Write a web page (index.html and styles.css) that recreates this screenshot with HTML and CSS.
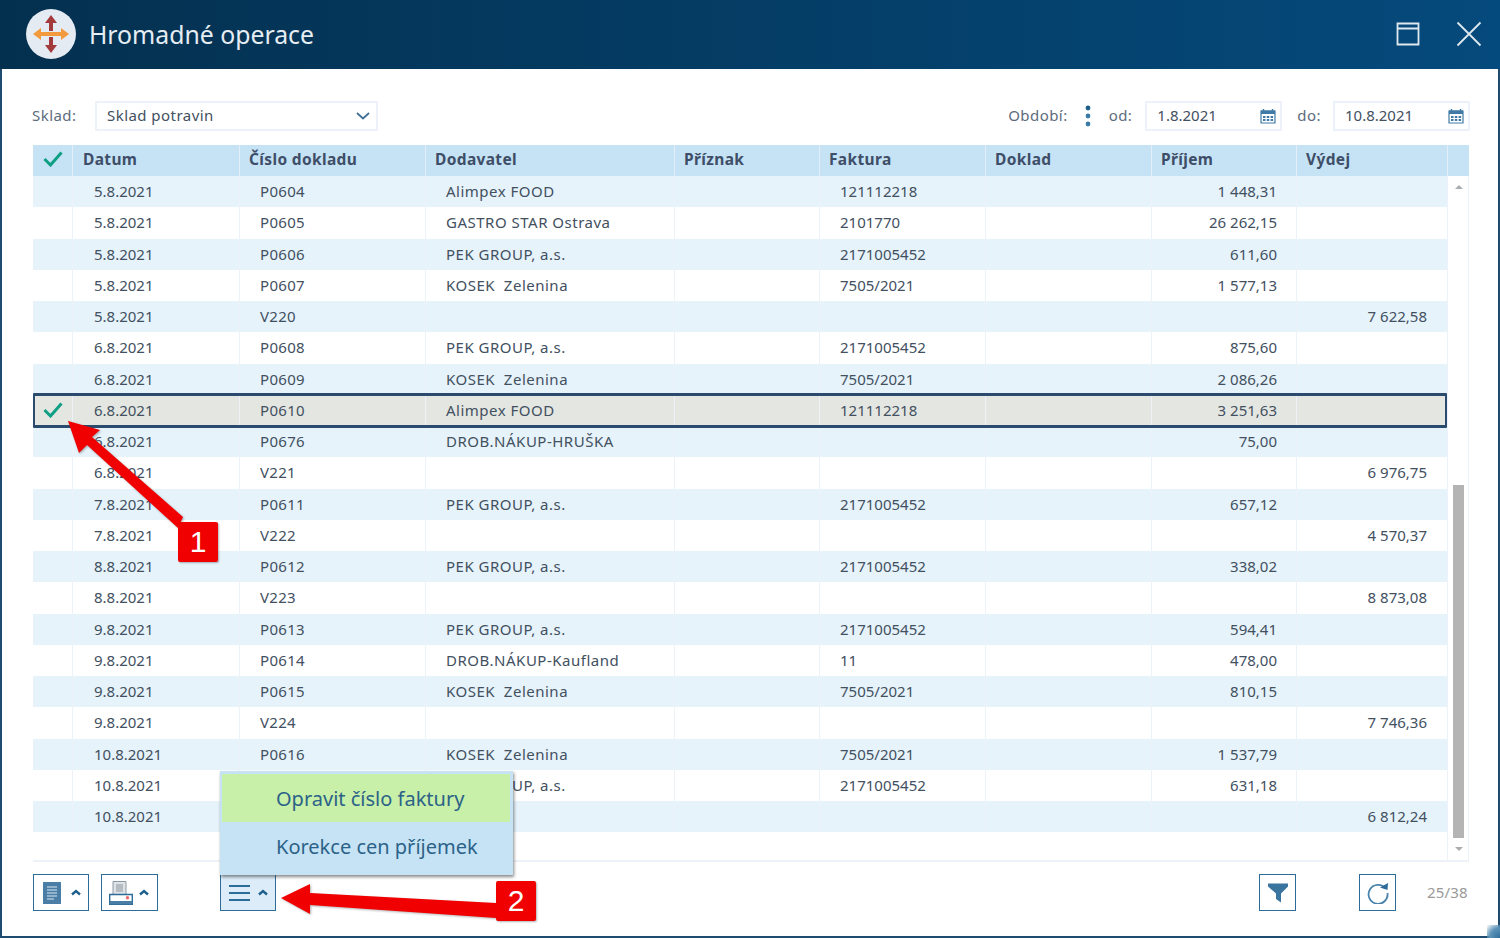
FILE: index.html
```html
<!DOCTYPE html>
<html lang="cs">
<head>
<meta charset="utf-8">
<title>Hromadné operace</title>
<link rel="stylesheet" href="styles.css">
</head>
<body>
<div class="window">
  <header class="titlebar">
    <div class="logo">
      <svg width="50" height="50" viewBox="0 0 50 50"><circle cx="25" cy="25" r="25" fill="#e4ebf2"/><path d="M25 6l6 8h-4v8h-4v-8h-4zM25 44l-6-8h4v-8h4v8h4z" fill="#a33a3c"/><path d="M7 25l8-6v4h20v-4l8 6-8 6v-4H15v4z" fill="#f49a3e"/></svg>
    </div>
    <h1 class="title">Hromadné operace</h1>
    <div class="win-actions">
      <svg width="24" height="24" viewBox="0 0 24 24"><path d="M1.500 1.500h21v21h-21zM1.500 6.500h21" fill="none" stroke="#dfe8ef" stroke-width="1.800"/></svg>
      <svg width="26" height="26" viewBox="0 0 26 26"><path d="M1.500 1.500l23 23M24.500 1.500l-23 23" fill="none" stroke="#dfe8ef" stroke-width="1.800"/></svg>
    </div>
  </header>
  <main class="content">
    <div class="filters">
      <span class="label label-sklad">Sklad:</span>
      <div class="field field-select"><span>Sklad potravin</span>
        <svg width="14" height="8" viewBox="0 0 14 8"><path d="M1 1l6 5.500L13 1" fill="none" stroke="#3f6f96" stroke-width="1.700"/></svg>
      </div>
      <div class="period">
        <span class="label">Období:</span>
        <svg class="dots" width="6" height="22" viewBox="0 0 6 22"><circle cx="3" cy="3" r="2.400" fill="#1f5f8c"/><circle cx="3" cy="11" r="2.400" fill="#3b7ba7"/><circle cx="3" cy="19" r="2.400" fill="#3b7ba7"/></svg>
        <span class="label label-od">od:</span>
        <div class="field field-date"><span>1.8.2021</span>
          <svg width="16" height="16" viewBox="0 0 16 16"><path d="M1 3h14v12H1z" fill="#fff" stroke="#3f7ba6" stroke-width="1.200"/><path d="M1 2.500h14v3.500H1z" fill="#3f7ba6"/><path d="M3.500 1v2M12.500 1v2" stroke="#3f7ba6" stroke-width="1.400"/><path d="M3 8h2.500v2H3zM6.800 8h2.500v2H6.800zM10.600 8h2.500v2h-2.500zM3 11h2.500v2H3zM6.800 11h2.500v2H6.800zM10.600 11h2.500v2h-2.500z" fill="#3f7ba6"/></svg>
        </div>
        <span class="label label-do">do:</span>
        <div class="field field-date"><span>10.8.2021</span>
          <svg width="16" height="16" viewBox="0 0 16 16"><path d="M1 3h14v12H1z" fill="#fff" stroke="#3f7ba6" stroke-width="1.200"/><path d="M1 2.500h14v3.500H1z" fill="#3f7ba6"/><path d="M3.500 1v2M12.500 1v2" stroke="#3f7ba6" stroke-width="1.400"/><path d="M3 8h2.500v2H3zM6.800 8h2.500v2H6.800zM10.600 8h2.500v2h-2.500zM3 11h2.500v2H3zM6.800 11h2.500v2H6.800zM10.600 11h2.500v2h-2.500z" fill="#3f7ba6"/></svg>
        </div>
      </div>
    </div>

    <div class="grid">
      <div class="row head">
        <div class="c"><svg class="check" width="20" height="16" viewBox="0 0 20 16"><path d="M1.500 8l6 6L18.500 1.500" fill="none" stroke="#0f9f84" stroke-width="3"/></svg></div>
        <div class="c">Datum</div><div class="c">Číslo dokladu</div><div class="c">Dodavatel</div><div class="c">Příznak</div><div class="c">Faktura</div><div class="c">Doklad</div><div class="c">Příjem</div><div class="c">Výdej</div><div class="c-end"></div>
      </div>
      <div class="body">
        <div class="rows">
          <div class="row"><div class="c"></div><div class="c">5.8.2021</div><div class="c">P0604</div><div class="c">Alimpex FOOD</div><div class="c"></div><div class="c">121112218</div><div class="c"></div><div class="c num">1 448,31</div><div class="c num"></div></div>
          <div class="row"><div class="c"></div><div class="c">5.8.2021</div><div class="c">P0605</div><div class="c">GASTRO STAR Ostrava</div><div class="c"></div><div class="c">2101770</div><div class="c"></div><div class="c num">26 262,15</div><div class="c num"></div></div>
          <div class="row"><div class="c"></div><div class="c">5.8.2021</div><div class="c">P0606</div><div class="c">PEK GROUP, a.s.</div><div class="c"></div><div class="c">2171005452</div><div class="c"></div><div class="c num">611,60</div><div class="c num"></div></div>
          <div class="row"><div class="c"></div><div class="c">5.8.2021</div><div class="c">P0607</div><div class="c">KOSEK&nbsp; Zelenina</div><div class="c"></div><div class="c">7505/2021</div><div class="c"></div><div class="c num">1 577,13</div><div class="c num"></div></div>
          <div class="row"><div class="c"></div><div class="c">5.8.2021</div><div class="c">V220</div><div class="c"></div><div class="c"></div><div class="c"></div><div class="c"></div><div class="c num"></div><div class="c num">7 622,58</div></div>
          <div class="row"><div class="c"></div><div class="c">6.8.2021</div><div class="c">P0608</div><div class="c">PEK GROUP, a.s.</div><div class="c"></div><div class="c">2171005452</div><div class="c"></div><div class="c num">875,60</div><div class="c num"></div></div>
          <div class="row"><div class="c"></div><div class="c">6.8.2021</div><div class="c">P0609</div><div class="c">KOSEK&nbsp; Zelenina</div><div class="c"></div><div class="c">7505/2021</div><div class="c"></div><div class="c num">2 086,26</div><div class="c num"></div></div>
          <div class="row selected"><div class="c"><svg class="check" width="20" height="16" viewBox="0 0 20 16"><path d="M1.500 8l6 6L18.500 1.500" fill="none" stroke="#0f9f84" stroke-width="3"/></svg></div><div class="c">6.8.2021</div><div class="c">P0610</div><div class="c">Alimpex FOOD</div><div class="c"></div><div class="c">121112218</div><div class="c"></div><div class="c num">3 251,63</div><div class="c num"></div></div>
          <div class="row"><div class="c"></div><div class="c">6.8.2021</div><div class="c">P0676</div><div class="c">DROB.NÁKUP-HRUŠKA</div><div class="c"></div><div class="c"></div><div class="c"></div><div class="c num">75,00</div><div class="c num"></div></div>
          <div class="row"><div class="c"></div><div class="c">6.8.2021</div><div class="c">V221</div><div class="c"></div><div class="c"></div><div class="c"></div><div class="c"></div><div class="c num"></div><div class="c num">6 976,75</div></div>
          <div class="row"><div class="c"></div><div class="c">7.8.2021</div><div class="c">P0611</div><div class="c">PEK GROUP, a.s.</div><div class="c"></div><div class="c">2171005452</div><div class="c"></div><div class="c num">657,12</div><div class="c num"></div></div>
          <div class="row"><div class="c"></div><div class="c">7.8.2021</div><div class="c">V222</div><div class="c"></div><div class="c"></div><div class="c"></div><div class="c"></div><div class="c num"></div><div class="c num">4 570,37</div></div>
          <div class="row"><div class="c"></div><div class="c">8.8.2021</div><div class="c">P0612</div><div class="c">PEK GROUP, a.s.</div><div class="c"></div><div class="c">2171005452</div><div class="c"></div><div class="c num">338,02</div><div class="c num"></div></div>
          <div class="row"><div class="c"></div><div class="c">8.8.2021</div><div class="c">V223</div><div class="c"></div><div class="c"></div><div class="c"></div><div class="c"></div><div class="c num"></div><div class="c num">8 873,08</div></div>
          <div class="row"><div class="c"></div><div class="c">9.8.2021</div><div class="c">P0613</div><div class="c">PEK GROUP, a.s.</div><div class="c"></div><div class="c">2171005452</div><div class="c"></div><div class="c num">594,41</div><div class="c num"></div></div>
          <div class="row"><div class="c"></div><div class="c">9.8.2021</div><div class="c">P0614</div><div class="c">DROB.NÁKUP-Kaufland</div><div class="c"></div><div class="c">11</div><div class="c"></div><div class="c num">478,00</div><div class="c num"></div></div>
          <div class="row"><div class="c"></div><div class="c">9.8.2021</div><div class="c">P0615</div><div class="c">KOSEK&nbsp; Zelenina</div><div class="c"></div><div class="c">7505/2021</div><div class="c"></div><div class="c num">810,15</div><div class="c num"></div></div>
          <div class="row"><div class="c"></div><div class="c">9.8.2021</div><div class="c">V224</div><div class="c"></div><div class="c"></div><div class="c"></div><div class="c"></div><div class="c num"></div><div class="c num">7 746,36</div></div>
          <div class="row"><div class="c"></div><div class="c">10.8.2021</div><div class="c">P0616</div><div class="c">KOSEK&nbsp; Zelenina</div><div class="c"></div><div class="c">7505/2021</div><div class="c"></div><div class="c num">1 537,79</div><div class="c num"></div></div>
          <div class="row"><div class="c"></div><div class="c">10.8.2021</div><div class="c"></div><div class="c c-under-menu">PEK GROUP, a.s.</div><div class="c"></div><div class="c">2171005452</div><div class="c"></div><div class="c num">631,18</div><div class="c num"></div></div>
          <div class="row"><div class="c"></div><div class="c">10.8.2021</div><div class="c"></div><div class="c"></div><div class="c"></div><div class="c"></div><div class="c"></div><div class="c num"></div><div class="c num">6 812,24</div></div>
        </div>
        <div class="scrollbar">
          <span class="arrow-up"></span>
          <div class="track"><div class="thumb"></div></div>
          <span class="arrow-down"></span>
        </div>
      </div>
    </div>

    <footer class="toolbar">
      <button class="btn btn-wide" type="button">
        <svg width="18" height="22" viewBox="0 0 18 22"><path d="M0 0h18v22H0z" fill="#4a7ea6"/><path d="M4 5h10M4 8h10M4 11h10M4 14h10M4 17h7" stroke="#dbe8f1" stroke-width="1.100"/></svg>
        <svg class="caret" width="10" height="7" viewBox="0 0 10 7"><path d="M1 5.500l4-3.500 4 3.500" fill="none" stroke="#1f5f8c" stroke-width="2.400"/></svg>
      </button>
      <button class="btn btn-wide btn-print" type="button">
        <svg width="24" height="24" viewBox="0 0 24 24"><path d="M4 .5h13v14H4z" fill="#dfe3e6" stroke="#8b9ba8"/><path d="M7 3h7v8H7z" fill="#b5bcc2"/><path d="M.7 13.500h22.600v9.800H.7z" fill="#fff" stroke="#2d6c99" stroke-width="1.400"/><path d="M.7 20h22.600v3.300H.7z" fill="#4a7ea6"/><circle cx="18.500" cy="16.800" r="1.700" fill="#ee6a6a"/></svg>
        <svg class="caret" width="10" height="7" viewBox="0 0 10 7"><path d="M1 5.500l4-3.500 4 3.500" fill="none" stroke="#1f5f8c" stroke-width="2.400"/></svg>
      </button>
      <div class="menu-anchor">
        <div class="menu">
          <div class="menu-item active">Opravit číslo faktury</div>
          <div class="menu-item">Korekce cen příjemek</div>
        </div>
        <button class="btn btn-wide btn-open" type="button">
          <svg width="21" height="18" viewBox="0 0 21 18"><path d="M0 2h21M0 9h21M0 16h21" stroke="#2d6c99" stroke-width="2"/></svg>
          <svg class="caret" width="10" height="7" viewBox="0 0 10 7"><path d="M1 5.500l4-3.500 4 3.500" fill="none" stroke="#1f5f8c" stroke-width="2.400"/></svg>
        </button>
      </div>
      <button class="btn btn-square btn-filter" type="button">
        <svg width="20" height="20" viewBox="0 0 20 20"><path d="M0 .5h20v3l-7 7v9l-5-3.500v-5.500l-8-7z" fill="#3a759f"/></svg>
      </button>
      <button class="btn btn-square btn-refresh" type="button">
        <svg width="22" height="22" viewBox="0 0 22 22"><path d="M18.600 6.500A9.500 9.500 0 1 0 20.500 11" fill="none" stroke="#4a83ac" stroke-width="1.800"/><path d="M13 5.500l7.500 2.500.5-7z" fill="#2d6c99"/></svg>
      </button>
      <span class="count">25/38</span>
    </footer>
  </main>

  <svg class="annotations" width="1500" height="938" viewBox="0 0 1500 938">
    <path d="M68 421l32 9-8 7 91 80-5 11-91-83-8 8z" fill="#f00000"/>
    <path d="M281 898l29-14v9l186 10v15l-186-13v9z" fill="#f00000"/>
  </svg>
  <div class="badge badge-one">1</div>
  <div class="badge badge-two">2</div>
</div>
</body>
</html>
```

FILE: styles.css
```css
* { box-sizing: border-box; }
html, body { margin: 0; padding: 0; }
body {
  width: 1500px;
  height: 938px;
  overflow: hidden;
  background: #fff;
  font-family: "Noto Sans", "Open Sans", sans-serif;
  font-size: 15px;
  color: #42505f;
}
.window {
  position: relative;
  width: 1500px;
  height: 938px;
  display: flex;
  flex-direction: column;
  border: 2px solid #1e4c70;
  border-top: 0;
  background: #fff;
}
.window::after {
  content: "";
  position: absolute;
  right: -2px;
  bottom: -2px;
  width: 13px;
  height: 13px;
  background: radial-gradient(circle at 100% 100%, #2d6c99 0, #5d93b8 55%, rgba(255, 255, 255, 0) 100%);
}
.titlebar {
  height: 69px;
  margin: 0 -2px;
  flex: none;
  display: flex;
  align-items: center;
  padding: 0 0 2px 26px;
  background: linear-gradient(90deg, #04304f 0%, #054a7c 100%);
}
.logo { width: 50px; height: 50px; }
.title {
  margin: 0 0 0 13px;
  font-size: 24.800px;
  font-weight: 400;
  color: #e6edf3;
}
.win-actions {
  margin-left: auto;
  display: flex;
  align-items: center;
  gap: 36px;
  padding-right: 18px;
}
.win-actions svg { display: block; }
.content {
  flex: 1;
  padding: 32px 29px 0 31px;
  display: flex;
  flex-direction: column;
}
.filters {
  display: flex;
  align-items: center;
  height: 30px;
  letter-spacing: .45px;
}
.label { color: #5d6c7c; position: relative; top: -1px; }
.label-sklad { margin-left: -1px; width: 63px; }
.field {
  display: flex;
  align-items: center;
  justify-content: space-between;
  height: 30px;
  border: 2px solid #edf1f9;
  padding: 0 4px 2px 10px;
  color: #42505f;
}
.field svg { position: relative; top: 1px; }
.field-select { width: 283px; padding-right: 6px; }
.field-date { width: 137px; letter-spacing: 0; }
.period { margin-left: auto; margin-right: -1px; display: flex; align-items: center; }
.dots { margin: 0 18px 0 17px; }
.label-od { margin-right: 13px; }
.label-do { margin: 0 12px 0 15px; }
.grid {
  margin-top: 14px;
  width: 1436px;
  border-bottom: 2px solid #edf1f8;
}
.row {
  display: grid;
  grid-template-columns: 40px 167px 186px 249px 145px 166px 166px 145px 151px;
  height: 31.250px;
  align-items: stretch;
  background: #fff;
  color: #42505f;
}
.rows .row:nth-child(odd) { background: #e6f3fb; }
.rows .row.selected {
  background: #e4e6e1;
  position: relative;
}
.rows .row.selected::after {
  content: "";
  position: absolute;
  left: 0;
  right: 0;
  top: -2px;
  bottom: -2px;
  border: 3px solid #2b4b6e;
  border-left-width: 2px;
  border-right-width: 2px;
  border-radius: 1px;
}
.c {
  display: flex;
  align-items: center;
  padding: 0 0 1px 21px;
  border-right: 1px solid #edf2f9;
  white-space: nowrap;
}
.c:first-child { padding-left: 0; justify-content: center; }
.c:nth-child(3) { letter-spacing: .3px; padding-left: 20px; }
.c:nth-child(4) { letter-spacing: .5px; padding-left: 20px; }
.num { justify-content: flex-end; padding: 0 19px 1px 0; }
.rows .c:nth-child(9) { padding-right: 20px; }
.rows .c:nth-child(6) { padding-left: 20px; }
.head {
  height: 31px;
  grid-template-columns: 40px 167px 186px 249px 145px 166px 166px 145px 151px 21px;
  background: #c5e3f5;
  font-weight: 700;
  font-size: 15.500px;
  color: #3f4e68;
}
.head .c { padding: 0 0 3px 10px; border-right-color: #e3eef8; letter-spacing: .35px; }
.head .c:nth-child(n+3) { padding-left: 9px; }
.head .c:first-child { padding-left: 0; }
.check { display: block; }
.body { display: flex; height: 684px; }
.rows { width: 1415px; border-right: 1px solid #edf2f9; }
.scrollbar {
  width: 21px;
  display: flex;
  flex-direction: column;
  align-items: center;
  border-right: 1px solid #edf2f9;
  padding: 0 0 9px 1px;
}
.arrow-up, .arrow-down {
  width: 0;
  height: 0;
  border-left: 4px solid transparent;
  border-right: 4px solid transparent;
}
.arrow-up { margin-top: 9px; border-bottom: 4px solid #a9adb0; }
.arrow-down { border-top: 4px solid #a9adb0; }
.track { flex: 1; width: 11px; padding-top: 296px; padding-bottom: 9px; }
.thumb { height: 100%; background: #b4b4b4; }
.toolbar {
  margin-top: 12px;
  display: flex;
  align-items: flex-start;
  height: 37px;
}
.btn {
  display: flex;
  align-items: center;
  height: 37px;
  padding: 0;
  border: 1.500px solid #2d6c99;
  background: #fff;
}
.btn svg { display: block; }
.btn-wide { width: 56px; padding-left: 9px; gap: 10px; }
.btn-print { width: 57px; margin-left: 12px; padding-left: 7px; gap: 6px; }
.btn-open { background: #dcedf9; padding-left: 8px; gap: 8px; }
.menu-anchor { position: relative; margin-left: 62px; }
.menu {
  position: absolute;
  left: 0;
  bottom: 36px;
  width: 293px;
  height: 104px;
  padding: 3px 3px 0 2px;
  background: #c5e3f5;
  box-shadow: 1px 2px 3px rgba(40, 40, 40, .55);
  z-index: 2;
}
.menu-item {
  height: 48px;
  display: flex;
  align-items: center;
  padding: 1px 0 0 54px;
  font-size: 20px;
  color: #2c6288;
  white-space: nowrap;
}
.menu-item.active { background: #c8f0a8; padding-top: 0; }
.btn-square { width: 37px; justify-content: center; }
.btn-filter { margin-left: auto; }
.btn-refresh { margin-left: 63px; }
.count {
  margin-left: 31px;
  line-height: 37px;
  color: #9a9a9a;
  width: 42px;
  white-space: nowrap;
  letter-spacing: .2px;
}
.annotations {
  position: absolute;
  left: -2px;
  top: 0;
  z-index: 3;
  filter: drop-shadow(1px 1px 1px rgba(0, 0, 0, .3));
}
.badge {
  position: absolute;
  z-index: 4;
  width: 40px;
  height: 40px;
  display: flex;
  align-items: center;
  justify-content: center;
  border-radius: 2px;
  background: #f00000;
  color: #fff;
  font-family: "Liberation Sans", Arial, sans-serif;
  font-size: 30px;
  box-shadow: 1px 1px 2px rgba(0, 0, 0, .3);
}
.badge-one { left: 176px; top: 522px; }
.badge-two { left: 494px; top: 881px; }
```
